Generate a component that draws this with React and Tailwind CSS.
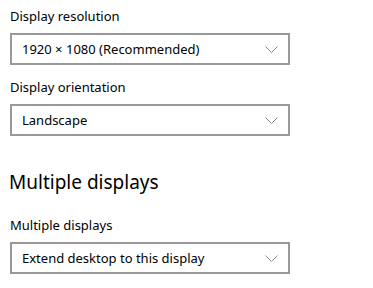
import React from 'react';

function Chevron() {
    return (
        <svg width="13" height="7" viewBox="0 0 13 7" className="shrink-0">
            <path d="M0.5 0.5 L6.5 6.5 L12.5 0.5" fill="none" stroke="#8a8a8a" strokeWidth="1" />
        </svg>
    );
}

function Dropdown({ value }) {
    return (
        <div className="w-[280px] h-[32px] border-2 border-[#999999] bg-white flex items-center justify-between pl-[10px] pr-[10px]">
            <span className="text-[13px] text-black leading-[20px]">{value}</span>
            <Chevron />
        </div>
    );
}

function Field({ label, value, className = '' }) {
    return (
        <div className={className}>
            <div className="text-[13px] leading-[20px] text-black mb-[7px]">{label}</div>
            <Dropdown value={value} />
        </div>
    );
}

export default function App() {
    return (
        <div className="w-[373px] h-[288px] bg-white px-[10px] pt-[6px] font-['Noto_Sans',sans-serif] overflow-hidden">
            <Field label="Display resolution" value="1920 × 1080 (Recommended)" />
            <Field label="Display orientation" value="Landscape" className="mt-[12px]" />
            <h2 className="text-[19px] leading-[28px] text-black mt-[32px] -ml-[1px]">Multiple displays</h2>
            <Field label="Multiple displays" value="Extend desktop to this display" className="mt-[19px]" />
        </div>
    );
}
